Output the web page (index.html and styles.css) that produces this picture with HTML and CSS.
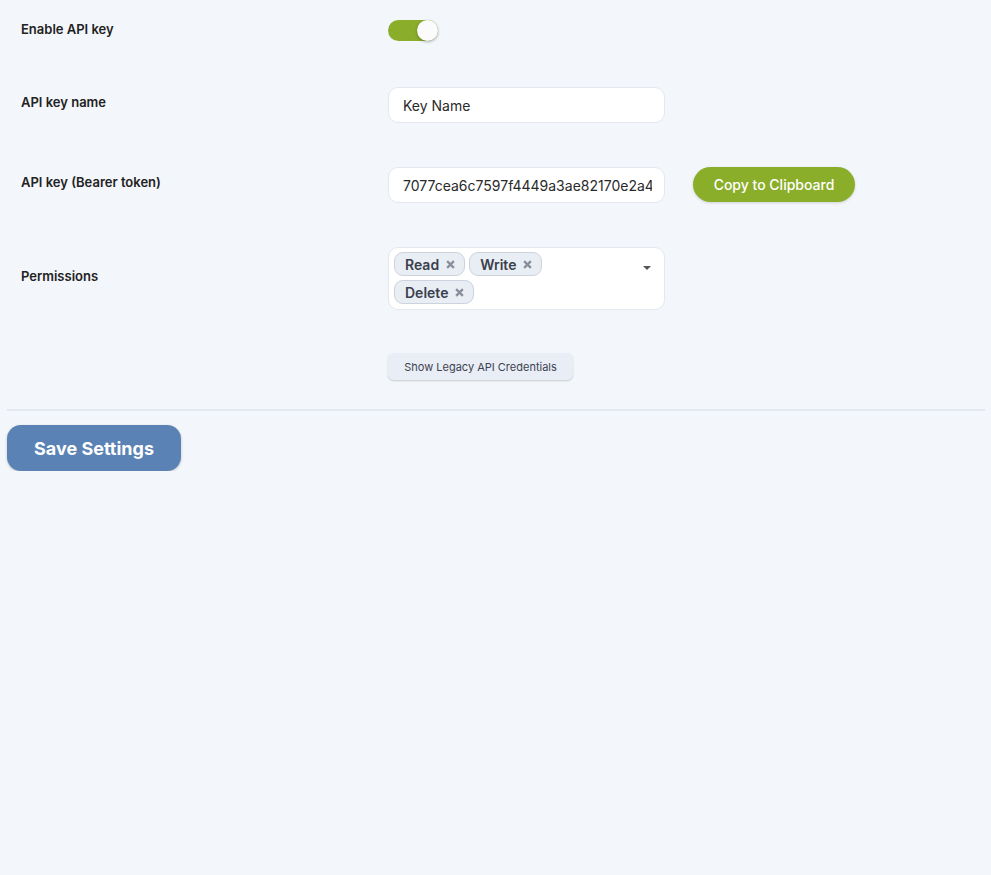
FILE: index.html
```html
<!DOCTYPE html>
<html lang="en">
<head>
<meta charset="utf-8">
<title>API Settings</title>
<link rel="stylesheet" href="styles.css">
</head>
<body>
<div class="form">
  <div class="row row-first">
    <div class="label">Enable API key</div>
    <div class="field">
      <span class="toggle"><span class="knob"></span></span>
    </div>
  </div>
  <div class="row">
    <div class="label">API key name</div>
    <div class="field">
      <input class="input" type="text" value="Key Name">
    </div>
  </div>
  <div class="row">
    <div class="label">API key (Bearer token)</div>
    <div class="field">
      <input class="input" type="text" readonly value="7077cea6c7597f4449a3ae82170e2a4c9d1b3f">
      <button class="btn-copy">Copy to Clipboard</button>
    </div>
  </div>
  <div class="row">
    <div class="label">Permissions</div>
    <div class="field">
      <div class="multi">
        <div class="chips">
          <span class="chip">Read <svg class="x" viewBox="0 0 8 8"><path d="M1 1L7 7M7 1L1 7"/></svg></span>
          <span class="chip">Write <svg class="x" viewBox="0 0 8 8"><path d="M1 1L7 7M7 1L1 7"/></svg></span>
          <span class="chip">Delete <svg class="x" viewBox="0 0 8 8"><path d="M1 1L7 7M7 1L1 7"/></svg></span>
        </div>
        <span class="caret"></span>
      </div>
    </div>
  </div>
  <div class="row row-last">
    <div class="label"></div>
    <div class="field">
      <button class="btn-legacy">Show Legacy API Credentials</button>
    </div>
  </div>
</div>
<div class="divider"></div>
<button class="btn-save">Save Settings</button>
</body>
</html>
```
FILE: styles.css
```css
html, body {
  margin: 0;
  padding: 0;
  background: #f3f6fa;
}
body {
  padding: 0 6px 0 7px;
  font-family: Inter, "Noto Sans", sans-serif;
  color: #222;
}
.form {
  padding: 20px 14px 0;
  display: flex;
  flex-direction: column;
  gap: 44px;
}
.row {
  display: flex;
  align-items: center;
}
.row-first {
  margin-bottom: 2px;
}
.row-last {
  margin-top: -1px;
}
.label {
  width: 367px;
  flex: none;
  font-size: 13px;
  font-weight: 600;
  color: #222;
  padding-bottom: 6px;
}
.row-first .label {
  padding-bottom: 3px;
}
.row-last .label {
  height: 1px;
  padding: 0;
}
.field {
  display: flex;
  align-items: center;
  gap: 28px;
}
.toggle {
  position: relative;
  display: block;
  width: 50px;
  height: 21px;
  border-radius: 11px;
  background: #8aae2a;
}
.knob {
  position: absolute;
  right: 0;
  top: 0;
  width: 21px;
  height: 21px;
  border-radius: 50%;
  background: #fbfbfb;
  box-shadow: 0 1px 3px rgba(0,0,0,0.3);
}
.input {
  box-sizing: border-box;
  width: 277px;
  height: 36px;
  margin: 0;
  padding: 0 12px 0 14px;
  background: #fff;
  border: 1px solid #e3e8ef;
  border-radius: 10px;
  font-family: Inter, "Noto Sans", sans-serif;
  font-size: 14px;
  color: #2a2a2a;
  outline: none;
}
.btn-copy {
  width: 162px;
  height: 35px;
  border: none;
  border-radius: 18px;
  background: #8aae2a;
  color: #fff;
  font-family: Inter, "Noto Sans", sans-serif;
  font-size: 14px;
  font-weight: 500;
  box-shadow: 0 1px 3px rgba(0,0,0,0.15);
  padding: 0;
  position: relative;
  top: -1px;
}
.multi {
  box-sizing: border-box;
  width: 277px;
  height: 63px;
  background: #fff;
  border: 1px solid #e3e8ef;
  border-radius: 10px;
  padding: 4px 5px 5px;
  display: flex;
  align-items: flex-start;
  justify-content: space-between;
}
.chips {
  width: 220px;
  display: flex;
  flex-wrap: wrap;
  gap: 4px;
}
.chip {
  box-sizing: border-box;
  height: 24px;
  display: inline-flex;
  align-items: center;
  gap: 7px;
  padding: 0 9px 0 10px;
  background: #e9edf4;
  border: 1px solid #cbd3de;
  border-radius: 9px;
  font-size: 14px;
  font-weight: 600;
  color: #3a404c;
}
.x {
  width: 9px;
  height: 9px;
  stroke: #878f9b;
  stroke-width: 2;
  fill: none;
}
.caret {
  margin: 14px 8px 0 0;
  width: 0;
  height: 0;
  border-left: 4px solid transparent;
  border-right: 4px solid transparent;
  border-top: 4px solid #555;
}
.btn-legacy {
  width: 185px;
  height: 27px;
  border: none;
  border-radius: 6px;
  background: #e8edf6;
  color: #3d4350;
  font-family: Inter, "Noto Sans", sans-serif;
  font-size: 11px;
  padding: 0;
  box-shadow: 0 1px 2px rgba(0,0,0,0.18);
}
.divider {
  margin-top: 29px;
  height: 2px;
  background: #e4e9f0;
}
.btn-save {
  margin-top: 14px;
  width: 174px;
  height: 46px;
  border: none;
  border-radius: 14px;
  background: #5a82b4;
  color: #fff;
  font-family: Inter, "Noto Sans", sans-serif;
  font-size: 18px;
  font-weight: 700;
  padding: 0;
  box-shadow: 0 1px 3px rgba(0,0,0,0.2);
}
```
